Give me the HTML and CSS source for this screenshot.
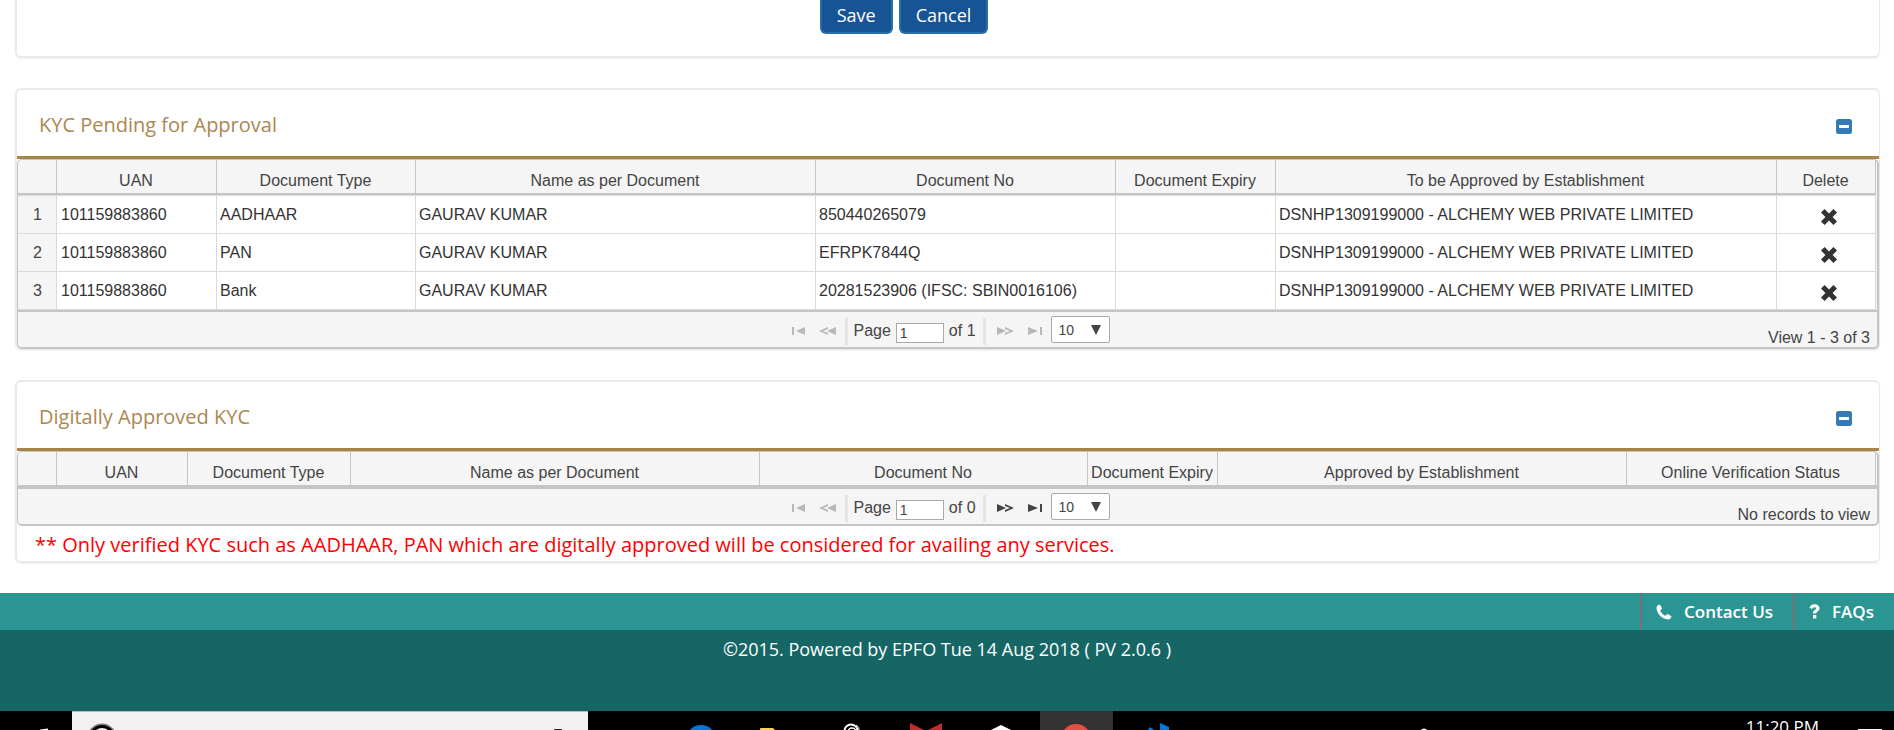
FILE: index.html
```html
<!DOCTYPE html>
<html lang="en">
<head>
<meta charset="utf-8">
<title>KYC</title>
<link rel="stylesheet" href="styles.css">
</head>
<body>
<svg class="defs" aria-hidden="true">
  <symbol id="first" viewBox="0 0 16 16"><path d="M1 4h2v8H1zM14 4v8L5 8z"/></symbol>
  <symbol id="prev" viewBox="0 0 18 16"><path d="M17 4v8L8 8zM9 4v2L4 8l5 2v2L0 8z"/></symbol>
  <symbol id="next" viewBox="0 0 18 16"><path d="M1 4v8l9-4zM9 4v2l5 2-5 2v2l9-4z"/></symbol>
  <symbol id="last" viewBox="0 0 16 16"><path d="M13 4h2v8h-2zM1 4v8l10-4z"/></symbol>
  <symbol id="cross" viewBox="0 0 16 16"><path d="M3.600 0 8 4.400 12.400 0 16 3.600 11.600 8 16 12.400 12.400 16 8 11.600 3.600 16 0 12.400 4.400 8 0 3.600z"/></symbol>
  <symbol id="minus" viewBox="0 0 16 16"><rect width="16" height="15" rx="2.500" fill="#337ab7"/><rect x="3" y="6" width="10" height="3" fill="#fff"/></symbol>
</svg>
<main class="page">
  <section class="card actions">
    <button class="btn" type="button">Save</button>
    <button class="btn" type="button">Cancel</button>
  </section>

  <section class="card">
    <header class="card-head">
      <h2>KYC Pending for Approval</h2>
      <button class="toggle" type="button" aria-label="Collapse"><svg width="16" height="16"><use href="#minus"/></svg></button>
    </header>
    <div class="grid">
      <table class="filled">
        <colgroup><col class="w39"><col class="w160"><col class="w199"><col class="w400"><col class="w300"><col class="w160"><col class="w501"><col class="w99"></colgroup>
        <thead><tr><th></th><th><div>UAN</div></th><th><div>Document Type</div></th><th><div>Name as per Document</div></th><th><div>Document No</div></th><th><div>Document Expiry</div></th><th><div>To be Approved by Establishment</div></th><th><div>Delete</div></th></tr></thead>
        <tbody>
          <tr><td>1</td><td>101159883860</td><td>AADHAAR</td><td>GAURAV KUMAR</td><td>850440265079</td><td></td><td>DSNHP1309199000 - ALCHEMY WEB PRIVATE LIMITED</td><td><button class="del" type="button" aria-label="Delete"><svg width="16" height="16"><use href="#cross"/></svg></button></td></tr>
          <tr><td>2</td><td>101159883860</td><td>PAN</td><td>GAURAV KUMAR</td><td>EFRPK7844Q</td><td></td><td>DSNHP1309199000 - ALCHEMY WEB PRIVATE LIMITED</td><td><button class="del" type="button" aria-label="Delete"><svg width="16" height="16"><use href="#cross"/></svg></button></td></tr>
          <tr><td>3</td><td>101159883860</td><td>Bank</td><td>GAURAV KUMAR</td><td>20281523906 (IFSC: SBIN0016106)</td><td></td><td>DSNHP1309199000 - ALCHEMY WEB PRIVATE LIMITED</td><td><button class="del" type="button" aria-label="Delete"><svg width="16" height="16"><use href="#cross"/></svg></button></td></tr>
        </tbody>
      </table>
      <div class="pager">
        <div class="pager-nav">
          <button class="nav off" type="button" aria-label="First page"><svg width="16" height="16"><use href="#first"/></svg></button>
          <button class="nav off" type="button" aria-label="Previous page"><svg width="18" height="16"><use href="#prev"/></svg></button>
          <span class="sep"></span>
          <label class="page-no">Page <input type="text" value="1"></label>
          <span class="total">of 1</span>
          <span class="sep"></span>
          <button class="nav off" type="button" aria-label="Next page"><svg width="18" height="16"><use href="#next"/></svg></button>
          <button class="nav off" type="button" aria-label="Last page"><svg width="16" height="16"><use href="#last"/></svg></button>
          <span class="size"><select aria-label="Rows per page"><option>10</option></select><svg width="10" height="10" viewBox="0 0 10 10"><path d="M0 0h10L5 10z"/></svg></span>
        </div>
        <span class="view">View 1 - 3 of 3</span>
      </div>
    </div>
  </section>

  <section class="card">
    <header class="card-head">
      <h2>Digitally Approved KYC</h2>
      <button class="toggle" type="button" aria-label="Collapse"><svg width="16" height="16"><use href="#minus"/></svg></button>
    </header>
    <div class="grid">
      <table class="empty">
        <colgroup><col class="w39"><col class="w131"><col class="w163"><col class="w409"><col class="w328"><col class="w130"><col class="w409"><col class="w249"></colgroup>
        <thead><tr><th></th><th><div>UAN</div></th><th><div>Document Type</div></th><th><div>Name as per Document</div></th><th><div>Document No</div></th><th><div>Document Expiry</div></th><th><div>Approved by Establishment</div></th><th><div>Online Verification Status</div></th></tr></thead>
      </table>
      <div class="pager">
        <div class="pager-nav">
          <button class="nav off" type="button" aria-label="First page"><svg width="16" height="16"><use href="#first"/></svg></button>
          <button class="nav off" type="button" aria-label="Previous page"><svg width="18" height="16"><use href="#prev"/></svg></button>
          <span class="sep"></span>
          <label class="page-no">Page <input type="text" value="1"></label>
          <span class="total">of 0</span>
          <span class="sep"></span>
          <button class="nav" type="button" aria-label="Next page"><svg width="18" height="16"><use href="#next"/></svg></button>
          <button class="nav" type="button" aria-label="Last page"><svg width="16" height="16"><use href="#last"/></svg></button>
          <span class="size"><select aria-label="Rows per page"><option>10</option></select><svg width="10" height="10" viewBox="0 0 10 10"><path d="M0 0h10L5 10z"/></svg></span>
        </div>
        <span class="view">No records to view</span>
      </div>
    </div>
    <p class="note">** Only verified KYC such as AADHAAR, PAN which are digitally approved will be considered for availing any services.</p>
  </section>
</main>

<footer>
  <nav class="links">
    <a href="#contact"><svg width="16" height="16" viewBox="0 0 16 16"><path d="M3.500.5C2 .800.500 2 .500 4c.500 6 5.500 11 11.500 11.500 2 0 3.300-1.500 3.500-3 0-.500-3.500-2.500-4-2.500-.700 0-1.500 1.800-2.200 1.800C7.500 11 5 8.500 4.200 6.700c0-.700 1.800-1.500 1.800-2.200C6 4 4.200.5 3.500.5z"/></svg>Contact Us</a>
    <a href="#faqs"><svg width="11" height="15" viewBox="0 0 11 15"><path d="M.5 3.700C1.500 1.300 3.300.3 5.500.3 8.300.3 10.500 2 10.500 4.500c0 3-3.200 3-3.200 4.700v.3H4V9c0-3 3-2.900 3-4.500C7 3.800 6.400 3.300 5.500 3.300c-1 0-1.600.700-2.300 1.700zM4 11h3.300v3.500H4z"/></svg>FAQs</a>
  </nav>
  <p class="copy">©2015. Powered by EPFO Tue 14 Aug 2018 ( PV 2.0.6 )</p>
</footer>

<div class="taskbar">
  <svg class="start" width="72" height="19"><path d="M40 18.500 48 17.500V19h-8z" fill="#fff"/></svg>
  <div class="search">
    <svg width="32" height="19"><circle cx="16" cy="26" r="13.500" fill="none" stroke="#777" stroke-width="2"/><circle cx="16" cy="26" r="11.500" fill="none" stroke="#000" stroke-width="3"/></svg>
    <svg width="10" height="19"><path d="M1 18q0-1 1-1h6q1 0 1 1z" fill="#222"/></svg>
  </div>
  <div class="apps">
    <svg width="73" height="19"><circle cx="36" cy="29" r="15" fill="#0078d7"/></svg>
    <svg width="73" height="19"><path d="M20 19v-1q0-1 1-1h12l2 2z" fill="#ffd143"/></svg>
    <svg width="73" height="19" fill="none" stroke="#fff" stroke-width="2"><circle cx="36" cy="20" r="6.500"/><circle cx="37" cy="21" r="4" stroke-width="1.500"/><path d="M41 14q4 2 3 6" stroke-width="1"/></svg>
    <svg width="73" height="19"><path d="M20 12l16 8 16-8v7H20z" fill="#c52b2b"/></svg>
    <svg width="73" height="19"><path d="M26 19l10-5 10 5z" fill="#fff"/></svg>
    <svg class="active" width="73" height="19"><circle cx="36" cy="28" r="15" fill="#e34f43"/></svg>
    <svg width="73" height="19"><path d="M45 12l9 4v3h-9zM33 19l2-3 4 3z" fill="#0078d7"/></svg>
  </div>
  <svg class="people" width="12" height="19"><circle cx="6" cy="21" r="3.500" fill="#fff"/></svg>
  <time>11:20 PM</time>
  <svg class="notes" width="24" height="19"><path d="M0 18h24v1H0z" fill="#fff"/></svg>
</div>
</body>
</html>
```
FILE: styles.css
```css
* { box-sizing: border-box; }
body {
  margin: 0;
  background: #fff;
  font-family: "Open Sans", "Noto Sans", sans-serif;
  font-size: 18px;
  color: #333;
}
h2, p { margin: 0; font-weight: 400; }
button, input, select { font: inherit; color: inherit; }
.defs { display: none; }
svg { display: block; flex: none; }

.page {
  display: flex;
  flex-direction: column;
  gap: 30px;
  padding: 0 14px 30px 15px;
}
.card {
  border: 2px solid #e9e9e9;
  border-right-width: 1px;
  border-radius: 6px;
  box-shadow: 0 1px 2px rgba(0, 0, 0, .06);
}
.actions {
  display: flex;
  justify-content: center;
  gap: 6px;
  padding: 0 88px 22px 0;
  border-top: 0;
  border-radius: 0 0 6px 6px;
}
.btn {
  padding: 3px 15px 5px;
  border: 2px solid #286fa8;
  border-top: 0;
  border-radius: 0 0 6px 6px;
  background: #165496;
  color: #fff;
  line-height: 24px;
}
.card-head {
  display: flex;
  justify-content: space-between;
  align-items: center;
  height: 69px;
  padding: 6px 27px 0 22px;
  border-bottom: 3px solid #a88445;
}
.card-head h2 {
  padding-bottom: 2px;
  font-size: 20px;
  line-height: 30px;
  color: #aa8850;
}
.toggle, .nav, .del {
  display: block;
  padding: 0;
  border: 0;
  background: none;
}
.toggle { padding-top: 2px; }

.grid {
  border: 1px solid #c5c5c5;
  border-width: 1px 2px 2px 1px;
  border-radius: 5px;
  overflow: hidden;
  background: #f5f5f5;
  font-family: "Liberation Sans", Arial, sans-serif;
  font-size: 16px;
}
.grid:last-child { margin-bottom: -1px; }
table {
  width: calc(100% - 1px);
  table-layout: fixed;
  border-collapse: separate;
  border-spacing: 0;
}
.w39 { width: 39px; }
.w99 { width: 99px; }
.w130 { width: 130px; }
.w131 { width: 131px; }
.w160 { width: 160px; }
.w163 { width: 163px; }
.w199 { width: 199px; }
.w249 { width: 249px; }
.w300 { width: 300px; }
.w328 { width: 328px; }
.w400 { width: 400px; }
.w409 { width: 409px; }
.w501 { width: 501px; }
th {
  height: 33px;
  padding: 13px 4px 4px 3px;
  border-right: 1px solid #c5c5c5;
  font-weight: 400;
  color: #444;
}
th div {
  overflow: hidden;
  white-space: nowrap;
  line-height: 16px;
}
.filled th { height: 35px; border-bottom: 2px solid #c5c5c5; }
td {
  height: 38px;
  padding: 1px 4px 0 3px;
  border-right: 1px solid #dadada;
  border-bottom: 1px solid #dadada;
  background: #fff;
  line-height: 18px;
  white-space: nowrap;
}
tbody tr:first-child td { height: 39px; border-top: 1px solid #dadada; }
td:first-child {
  padding-left: 5px;
  background: #f5f5f5;
  text-align: center;
  color: #444;
}
td:nth-child(2) { padding-left: 4px; }
td:last-child { padding: 4px 0 0 6px; }
.del { margin: 0 auto; fill: #333; }

.pager {
  display: grid;
  grid-template-columns: 1fr auto 1fr;
  height: 37px;
  border-top: 2px solid #c5c5c5;
  color: #444;
}
.empty + .pager { height: 39px; border-top-width: 4px; }
.pager-nav {
  grid-column: 2;
  display: flex;
  align-items: center;
  padding: 3px 0 0 6px;
}
.nav { margin-right: 10px; fill: #444; }
.nav + .nav { margin: 0 8px 0 2px; }
.sep + .nav { margin-left: 10px; margin-right: 11px; }
.off { fill: #b8b8b8; }
.sep { width: 3px; height: 27px; background: #e4e4e4; }
.page-no { display: flex; align-items: center; gap: 5px; padding-left: 5px; }
.page-no input {
  width: 48px;
  height: 20px;
  margin-top: 3px;
  padding: 0 3px;
  border: 1px solid #a9a9a9;
  border-radius: 0;
  background: #fff;
  font-size: 14px;
}
.total { padding: 0 7px 0 5px; }
.size { position: relative; }
.size select {
  display: block;
  width: 59px;
  height: 27px;
  margin-bottom: 3px;
  padding: 0 7px;
  border: 1px solid #a9a9a9;
  border-radius: 2px;
  background: #fff;
  font-size: 14px;
  appearance: none;
}
.size svg {
  position: absolute;
  top: 9px;
  right: 9px;
  fill: #444;
  pointer-events: none;
}
.view {
  align-self: end;
  justify-self: end;
  padding-right: 7px;
  line-height: 18px;
}
.note {
  padding: 6px 18px 3px;
  font-size: 20px;
  line-height: 26px;
  color: #f00;
}

footer { color: #fff; background: #176666; }
.links {
  display: flex;
  justify-content: flex-end;
  background: #2b9594;
}
.links a {
  display: flex;
  align-items: center;
  gap: 12px;
  height: 37px;
  padding: 0 20px 0 14px;
  border-left: 2px solid #79706f;
  font-size: 17px;
  font-weight: 600;
  color: #fff;
  text-decoration: none;
}
.links svg { fill: #fff; }
.copy { height: 81px; padding-top: 6px; text-align: center; line-height: 26px; }

.taskbar {
  display: flex;
  height: 19px;
  overflow: hidden;
  background: #000;
}
.search {
  display: flex;
  justify-content: space-between;
  width: 516px;
  padding: 0 25px 0 14px;
  border-top: 1px solid #bbb;
  background: #f1f1f1;
}
.apps { display: flex; gap: 2px; padding-left: 77px; }
.active { background: #333; }
.people { margin-left: auto; }
.taskbar time {
  margin: 4px 39px 0 316px;
  color: #fff;
  font-size: 17px;
  line-height: 24px;
}
.notes { margin-right: 12px; }
```
